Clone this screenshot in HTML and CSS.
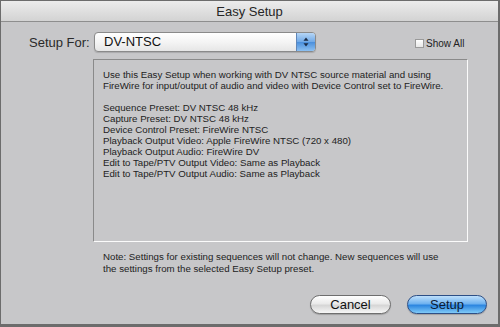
FILE: index.html
```html
<!DOCTYPE html>
<html lang="en">
<head>
  <meta charset="UTF-8" />
  <title>Easy Setup</title>
  <link rel="stylesheet" href="styles.css">
</head>
<body>
  <div class="window">
    <div class="titlebar">Easy Setup</div>

    <div class="setup-row">
      <span class="label">Setup For:</span>
      <div class="popup">
        <span class="popup-value">DV-NTSC</span>
        <span class="stepper">
          <svg width="6" height="10" viewBox="0 0 6 10">
            <path d="M3 0.5 L5.5 3.8 L0.5 3.8 Z" fill="#1b2b45"/>
            <path d="M3 9.5 L5.5 6.2 L0.5 6.2 Z" fill="#1b2b45"/>
          </svg>
        </span>
      </div>
      <label class="show-all"><span class="checkbox"></span>Show All</label>
    </div>

    <!-- description of selected preset -->
    <div class="desc-box">
      <p>Use this Easy Setup when working with DV NTSC source material and using FireWire for input/output of audio and video with Device Control set to FireWire.</p>
      <p>
        Sequence Preset: DV NTSC 48 kHz<br>
        Capture Preset: DV NTSC 48 kHz<br>
        Device Control Preset: FireWire NTSC<br>
        Playback Output Video: Apple FireWire NTSC (720 x 480)<br>
        Playback Output Audio: FireWire DV<br>
        Edit to Tape/PTV Output Video: Same as Playback<br>
        Edit to Tape/PTV Output Audio: Same as Playback
      </p>
    </div>

    <p class="note">Note: Settings for existing sequences will not change. New sequences will use the settings from the selected Easy Setup preset.</p>

    <div class="buttons">
      <button class="btn">Cancel</button>
      <button class="btn btn-default">Setup</button>
    </div>
  </div>
</body>
</html>
```

FILE: styles.css
```css
html, body {
  margin: 0;
  padding: 0;
}
body {
  font-family: 'Liberation Sans', Arial, sans-serif;
  color: #222;
  background: #c7c7c9;
}
.window {
  width: 500px;
  height: 327px;
  box-sizing: border-box;
  border: 1px solid #6c6c6c;
  border-bottom-width: 3px;
  border-right-width: 2px;
  background: #c7c7c9;
}
.titlebar {
  height: 20px;
  line-height: 21px;
  text-align: center;
  font-size: 13px;
  color: #262626;
  background: linear-gradient(#ececec, #d3d3d3);
  border-bottom: 1px solid #8e8e8e;
}
.setup-row {
  display: flex;
  align-items: center;
  margin-top: 10px;
  padding-left: 28px;
  height: 20px;
}
.label {
  font-size: 13px;
  width: 65px;
  color: #2a2a2a;
}
.popup {
  display: flex;
  width: 220px;
  height: 18px;
  border: 1px solid #8a8a8a;
  border-radius: 4px;
  background: linear-gradient(#ffffff, #f4f4f4 50%, #e6e6e6);
  overflow: hidden;
  box-shadow: 0 1px 1px rgba(0,0,0,0.15);
}
.popup-value {
  flex: 1;
  font-size: 13px;
  line-height: 18px;
  padding-left: 9px;
  color: #111;
}
.stepper {
  width: 18px;
  display: flex;
  align-items: center;
  justify-content: center;
  border-left: 1px solid #5f86b8;
  background: linear-gradient(#b6d6f6, #6fa8e6 50%, #4a8fdc 51%, #8cc0f2);
}
.show-all {
  display: flex;
  align-items: center;
  margin-left: 99px;
  margin-top: 3px;
  font-size: 10px;
  color: #222;
}
.checkbox {
  width: 7px;
  height: 7px;
  border: 1px solid #9a9a9a;
  background: linear-gradient(#ffffff, #e8e8e8);
  margin-right: 2px;
}
.desc-box {
  margin: 7px 0 0 92px;
  width: 355px;
  height: 172px;
  padding: 9px 9px 0 9px;
  border-top: 1px solid #8a8a8a;
  border-left: 1px solid #8a8a8a;
  border-right: 1px solid #fbfbfb;
  border-bottom: 1px solid #fbfbfb;
  font-size: 9.7px;
  line-height: 11px;
}
.desc-box p {
  margin: 0 0 11px 0;
}
.note {
  margin: 9px 0 0 102px;
  width: 343px;
  font-size: 9.7px;
  line-height: 12px;
}
.buttons {
  display: flex;
  justify-content: flex-end;
  gap: 16px;
  margin-top: 20px;
  padding-right: 11px;
}
.btn {
  width: 81px;
  height: 19px;
  border-radius: 10px;
  border: 1px solid #6e6e6e;
  background: linear-gradient(#ffffff, #eaeaea 45%, #d6d6d6 55%, #f6f6f6);
  font-family: 'Liberation Sans', Arial, sans-serif;
  font-size: 13px;
  color: #111;
  padding: 0;
  line-height: 17px;
  box-shadow: 0 1px 1px rgba(0,0,0,0.2);
}
.btn-default {
  width: 80px;
  border-color: #2d4f86;
  background: linear-gradient(#bfe0fb, #6fb2f0 45%, #2c86e0 55%, #7fcaf8);
  color: #0c1a33;
}
```
